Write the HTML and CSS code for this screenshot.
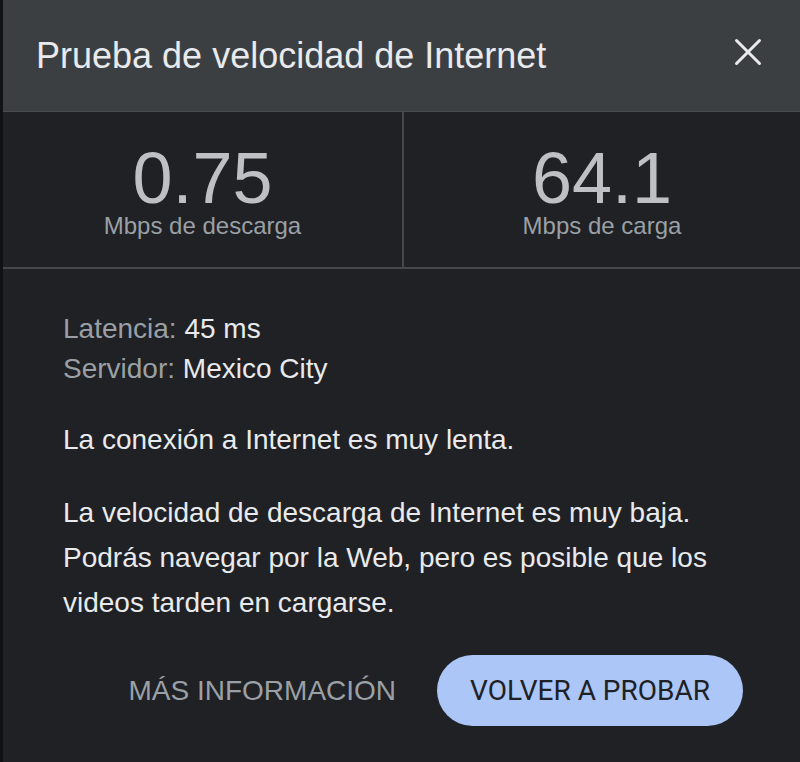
FILE: index.html
```html
<!DOCTYPE html>
<html lang="es">
<head>
<meta charset="utf-8">
<title>Prueba de velocidad de Internet</title>
<link rel="stylesheet" href="styles.css">
</head>
<body>
<div class="dialog">
  <header class="header">
    <h1 class="title">Prueba de velocidad de Internet</h1>
    <button class="close" aria-label="Cerrar">
      <svg width="28" height="28" viewBox="0 0 28 28"><path d="M2.5 2.5 L25.5 25.5 M25.5 2.5 L2.5 25.5" stroke="#e8eaed" stroke-width="3" stroke-linecap="round" fill="none"/></svg>
    </button>
  </header>
  <section class="stats">
    <div class="stat">
      <div class="stat-value">0.75</div>
      <div class="stat-label">Mbps de descarga</div>
    </div>
    <div class="stat stat-right">
      <div class="stat-value">64.1</div>
      <div class="stat-label">Mbps de carga</div>
    </div>
  </section>
  <section class="details">
    <div class="meta">
      <div class="meta-row"><span class="meta-key">Latencia:</span> 45 ms</div>
      <div class="meta-row"><span class="meta-key">Servidor:</span> Mexico City</div>
    </div>
    <p class="text">La conexión a Internet es muy lenta.</p>
    <p class="text">La velocidad de descarga de Internet es muy baja. Podrás navegar por la Web, pero es posible que los videos tarden en cargarse.</p>
    <div class="actions">
      <button class="link-btn">MÁS INFORMACIÓN</button>
      <button class="pill-btn">VOLVER A PROBAR</button>
    </div>
  </section>
</div>
</body>
</html>
```
FILE: styles.css
```css
html, body {
  margin: 0;
  padding: 0;
  background: #111213;
  height: 100%;
  overflow: hidden;
}
.dialog {
  margin-left: 3px;
  height: 762px;
  background: #202124;
  font-family: "Liberation Sans", Arial, sans-serif;
  color: #e8eaed;
}
.header {
  height: 111px;
  border-bottom: 1px solid #4a4d50;
  background: #3c3f42;
  display: flex;
  align-items: center;
  justify-content: space-between;
  padding: 0 38px 0 33px;
}
.title {
  margin: 0;
  font-size: 36px;
  font-weight: normal;
  line-height: 1.15;
  color: #e8eaed;
}
.close {
  align-self: flex-start;
  margin-top: 38px;
  width: 28px;
  height: 28px;
  padding: 0;
  border: 0;
  background: none;
  display: block;
}
.close svg { display: block; }
.stats {
  display: grid;
  grid-template-columns: 399px 1fr;
  border-bottom: 2px solid #45484b;
}
.stat {
  padding: 30px 0 29px;
  text-align: center;
}
.stat-right {
  border-left: 2px solid #45484b;
}
.stat-value {
  font-size: 72px;
  line-height: 72px;
  color: #bdc1c6;
}
.stat-label {
  font-size: 24px;
  line-height: 24px;
  color: #9aa0a6;
}
.details {
  padding: 40px 57px 0 60px;
}
.meta-row {
  font-size: 28px;
  line-height: 40px;
}
.meta-key {
  color: #9aa0a6;
}
.text {
  margin: 28px 0 0;
  font-size: 28px;
  line-height: 45px;
}
.actions {
  margin-top: 30px;
  display: flex;
  justify-content: flex-end;
  align-items: center;
  gap: 41px;
}
.link-btn {
  border: 0;
  background: none;
  padding: 0;
  font-family: "Liberation Sans", Arial, sans-serif;
  font-size: 28px;
  color: #9aa0a6;
}
.pill-btn {
  height: 71px;
  padding: 0 33px;
  border: 0;
  border-radius: 36px;
  background: #abc6f7;
  color: #202124;
  font-family: Roboto, "Liberation Sans", sans-serif;
  font-size: 28px;
}
```
